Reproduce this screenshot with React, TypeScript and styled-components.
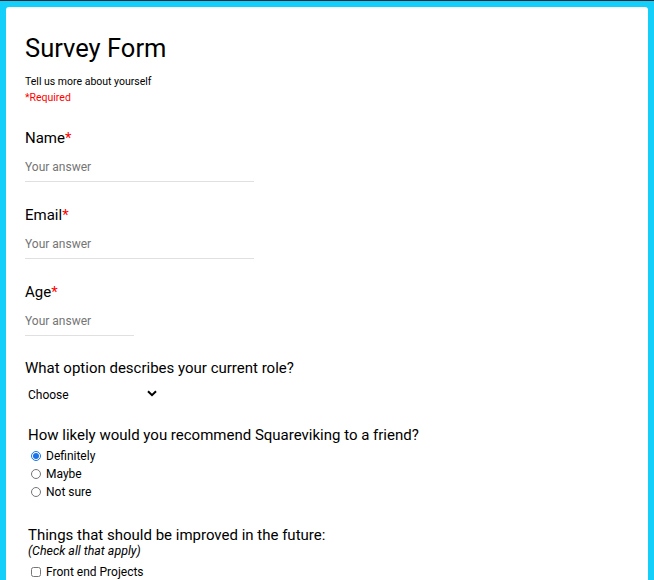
import styled, { createGlobalStyle } from 'styled-components'

const GlobalStyle = createGlobalStyle`
	html, body {
		margin: 0;
		padding: 0;
		background: #13cffa;
	}
	body {
		border-top: 1px solid #1b2a33;
		font-family: Roboto, 'Liberation Sans', Arial, sans-serif;
		color: #000;
	}
`

const questions = [
	{ id: 'name', label: 'Name', width: 229, gap: 22 },
	{ id: 'email', label: 'Email', width: 229, gap: 23 },
	{ id: 'age', label: 'Age', width: 109, gap: 23 },
]

const recommend = ['Definitely', 'Maybe', 'Not sure']

export default function App() {
	return (
		<>
			<GlobalStyle />
			<Page>
				<Card>
					<Title>Survey Form</Title>
					<Subtitle>Tell us more about yourself</Subtitle>
					<RequiredNote>*Required</RequiredNote>

					{questions.map((q) => (
						<Field key={q.id} $gap={q.gap}>
							<Label htmlFor={q.id}>
								{q.label}
								<Star>*</Star>
							</Label>
							<TextInput id={q.id} placeholder='Your answer' $width={q.width} />
						</Field>
					))}

					<Field $gap={22}>
						<Label htmlFor='role'>What option describes your current role?</Label>
						<SelectWrap>
							<Select id='role' defaultValue=''>
								<option value=''>Choose</option>
								<option value='student'>Student</option>
								<option value='fulltime'>Full time job</option>
							</Select>
							<Chevron width='10' height='7' viewBox='0 0 10 7'>
								<path d='M1 1.2 L5 5.2 L9 1.2' fill='none' stroke='#000' strokeWidth='2' />
							</Chevron>
						</SelectWrap>
					</Field>

					<Group $gap={21}>
						<GroupLabel>How likely would you recommend Squareviking to a friend?</GroupLabel>
						<ChoiceList>
							{recommend.map((r, i) => (
								<Choice key={r}>
									<Radio type='radio' name='recommend' defaultChecked={i === 0} />
									{r}
								</Choice>
							))}
						</ChoiceList>
					</Group>

					<Group $gap={24}>
						<GroupLabel>Things that should be improved in the future:</GroupLabel>
						<Hint>(Check all that apply)</Hint>
						<Choice $top={6}>
							<Check type='checkbox' />
							Front end Projects
						</Choice>
					</Group>
				</Card>
			</Page>
		</>
	)
}

const Page = styled.div`
	padding: 6px 6px 0 6px;
	height: 579px;
	box-sizing: border-box;
	overflow: hidden;
`
const Card = styled.div`
	background: #fff;
	border-radius: 3px 3px 0 0;
	padding: 27px 19px 40px 19px;
	min-height: 600px;
	box-sizing: border-box;
`
const Title = styled.h1`
	margin: 0;
	font-size: 25.5px;
	line-height: 29px;
	font-weight: 400;
`
const Subtitle = styled.p`
	margin: 11px 0 0 0;
	font-size: 10.5px;
	line-height: 16px;
`
const RequiredNote = styled.p`
	margin: 0;
	font-size: 10.5px;
	line-height: 16px;
	color: #ff0000;
`
const Field = styled.div<{ $gap: number }>`
	display: flex;
	flex-direction: column;
	align-items: flex-start;
	margin-top: ${(p) => p.$gap}px;
`
const Label = styled.label`
	font-size: 15px;
	line-height: 20px;
`
const Star = styled.span`
	color: #ff0000;
`
const TextInput = styled.input<{ $width: number }>`
	margin-top: 4px;
	width: ${(p) => p.$width}px;
	height: 30px;
	box-sizing: border-box;
	border: none;
	border-bottom: 1px solid #e0e0e0;
	padding: 0;
	font-family: inherit;
	font-size: 12px;
	outline: none;
	&::placeholder {
		color: #757575;
	}
`
const SelectWrap = styled.div`
	position: relative;
	width: 135px;
	height: 20px;
	margin-top: 6px;
`
const Select = styled.select`
	appearance: none;
	width: 100%;
	height: 100%;
	border: none;
	background: transparent;
	padding: 0 0 0 3px;
	font-family: inherit;
	font-size: 12px;
	color: #000;
	outline: none;
`
const Chevron = styled.svg`
	position: absolute;
	left: 122px;
	top: 6px;
	pointer-events: none;
`
const Group = styled.div<{ $gap: number }>`
	display: flex;
	flex-direction: column;
	padding-left: 3px;
	margin-top: ${(p) => p.$gap}px;
`
const GroupLabel = styled.div`
	font-size: 15px;
	line-height: 20px;
`
const ChoiceList = styled.div`
	display: flex;
	flex-direction: column;
	margin-top: 2px;
`
const Hint = styled.div`
	font-size: 12.4px;
	line-height: 12px;
	font-style: italic;
`
const Choice = styled.label<{ $top?: number }>`
	display: flex;
	align-items: center;
	gap: 5px;
	font-size: 12px;
	line-height: 18px;
	margin-top: ${(p) => p.$top ?? 0}px;
`
const Radio = styled.input`
	width: 10px;
	height: 10px;
	margin: 0 0 0 3px;
	accent-color: #1a73e8;
`
const Check = styled.input`
	width: 10px;
	height: 10px;
	margin: 0 0 0 3px;
`
